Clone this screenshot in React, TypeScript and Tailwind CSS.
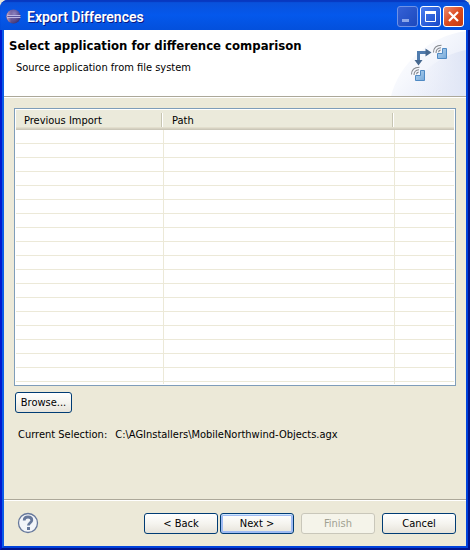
import type { ButtonHTMLAttributes, ReactNode } from "react";
import clsx from "clsx";

const ROWS = Array.from({ length: 18 }, (_, i) => i);

function EclipseIcon() {
  return (
    <svg width="16" height="16" viewBox="0 0 16 16" aria-hidden="true">
      <defs>
        <radialGradient id="orb" cx="0.55" cy="0.3" r="0.75">
          <stop offset="0" stopColor="#8d84c4" />
          <stop offset="0.5" stopColor="#50478e" />
          <stop offset="1" stopColor="#241d5c" />
        </radialGradient>
        <linearGradient id="rim" x1="0" y1="0" x2="1" y2="0">
          <stop offset="0" stopColor="#e0b4c0" />
          <stop offset="0.35" stopColor="#8d78b0" stopOpacity="0.4" />
          <stop offset="1" stopColor="#8d78b0" stopOpacity="0" />
        </linearGradient>
      </defs>
      <circle cx="7.5" cy="7.5" r="7" fill="url(#orb)" />
      <circle cx="7.5" cy="7.5" r="7" fill="url(#rim)" />
      <path d="M1 6.5h13.5M1 8.5h13.5" stroke="#bdb8e4" />
      <path d="M1.5 7.5h12.5" stroke="#5a529c" />
    </svg>
  );
}

function Device({ x, y }: { x: number; y: number }) {
  return (
    <g transform={`translate(${x} ${y})`}>
      <path d="M9.5 4.5H13.5V14.5H4.5V9.5H9.5Z" fill="url(#device)" stroke="#4f8ac4" />
      <path
        d="M0.5 8.5C0.5 4 3.5 1.3 8.5 1.2M3 9C3 5.9 4.8 3.9 8 3.7M5.5 8.2C5.6 7 6.3 6.3 7.6 6.1"
        fill="none"
        stroke="#85888d"
        strokeWidth="1.1"
      />
    </g>
  );
}

function BannerArt() {
  return (
    <svg width="75" height="66" viewBox="0 0 75 66" aria-hidden="true">
      <defs>
        <linearGradient id="swirl" x1="0.1" y1="0.1" x2="1" y2="0.8">
          <stop offset="0" stopColor="#ffffff" />
          <stop offset="0.4" stopColor="#f6f8fd" />
          <stop offset="1" stopColor="#e4e9f7" />
        </linearGradient>
        <linearGradient id="swirl2" x1="0" y1="0.5" x2="1" y2="0.4">
          <stop offset="0" stopColor="#eef1fa" stopOpacity="0" />
          <stop offset="1" stopColor="#dfe5f5" />
        </linearGradient>
        <linearGradient id="device" x1="0" y1="0" x2="1" y2="1">
          <stop offset="0" stopColor="#b4d3ee" />
          <stop offset="1" stopColor="#76a9da" />
        </linearGradient>
      </defs>
      <path d="M0 66C8 34 38 6 75 1V66Z" fill="url(#swirl)" />
      <path d="M20 66C26 44 46 26 75 20V66Z" fill="url(#swirl2)" />
      <path d="M27.5 30V22.5H35" fill="none" stroke="#507cae" strokeWidth="3" />
      <path d="M34.5 18.5V26.5L40.5 22.5ZM23.5 30H31.5L27.5 35.5Z" fill="#46688f" />
      <Device x={42} y={14} />
      <Device x={20} y={36} />
    </svg>
  );
}

function HelpIcon() {
  return (
    <svg width="22" height="22" viewBox="0 0 22 22" aria-hidden="true">
      <circle cx="11" cy="11" r="9.5" fill="#f3f5f9" stroke="#66789b" strokeWidth="1.3" />
      <path
        d="M7.2 8.6C7.2 6.2 8.8 5 11 5C13.4 5 14.8 6.3 14.8 8.2C14.8 10.7 11.4 10.8 11.4 13.6"
        fill="none"
        stroke="#66789b"
        strokeWidth="2.8"
      />
      <rect x="10" y="15" width="3" height="3" fill="#66789b" />
    </svg>
  );
}

function CaptionButton({ label, className, children }: { label: string; className: string; children: ReactNode }) {
  return (
    <button
      type="button"
      aria-label={label}
      className={clsx("h-[21px] w-[21px] rounded-[3px] border bg-linear-to-br", className)}
    >
      <svg width="19" height="19" viewBox="0 0 19 19" aria-hidden="true">
        {children}
      </svg>
    </button>
  );
}

function DialogButton({ className, ...props }: ButtonHTMLAttributes<HTMLButtonElement>) {
  return (
    <button
      type="button"
      className={clsx(
        "h-[21px] rounded-[3px] border border-[#003c74] bg-linear-to-b from-white via-[#f5f4ef] to-[#e6e3da] pt-px text-center leading-[18px]",
        "disabled:border-[#c9c7ba] disabled:bg-[#f5f4ea] disabled:bg-none disabled:text-[#a1a192]",
        className,
      )}
      {...props}
    />
  );
}

export default function App() {
  return (
    <div className="bg-[#e9e6d8]">
      <div className="flex min-h-screen flex-col overflow-hidden rounded-t-lg bg-[#0842dc] font-['DejaVu_Sans_Condensed','DejaVu_Sans',sans-serif] text-[11px] text-black">
        <header className="flex h-[30px] items-center bg-linear-to-b from-[#0a50d8] via-[#0458ec] to-[#0350dc] px-[6px] pt-[3px] shadow-[inset_0_2px_1px_#0838c0]">
          <EclipseIcon />
          <h1 className="ml-[5px] flex-1 font-[Roboto,sans-serif] text-[14px] leading-[18px] font-semibold text-white [text-shadow:1px_1px_#0a1883]">
            Export Differences
          </h1>
          <div className="flex gap-[2px]">
            <CaptionButton label="Minimize" className="border-[#6f92e6] from-[#3561d6] to-[#1c49bd]">
              <path d="M4 13.5h7" stroke="#8ba6e9" strokeWidth="3" />
            </CaptionButton>
            <CaptionButton label="Maximize" className="border-white from-[#4a7df0] to-[#1647c8]">
              <path d="M4.5 5.5h10v9h-10z" fill="none" stroke="#fff" />
              <path d="M4 5.5h11" stroke="#fff" strokeWidth="3" />
            </CaptionButton>
            <CaptionButton label="Close" className="border-white from-[#ec8a6c] via-[#dc4a1e] to-[#c23a10]">
              <path d="M5 5l9 9M14 5l-9 9" stroke="#fff" strokeWidth="2.2" />
            </CaptionButton>
          </div>
        </header>

        <div className="flex flex-1 flex-col border-x-2 border-b-2 border-r-[#00138c] border-b-[#00138c] border-l-[#0019cf]">
          <div className="flex flex-1 flex-col border-x-2 border-b-2 border-r-[#0042dc] border-b-[#0042dc] border-l-[#0a5be8] bg-[#ece9d8]">
            <section className="flex h-[67px] justify-between border-b border-[#aca899] bg-white">
              <div className="pt-2 pl-[5px]">
                <h2 className="text-[13px] leading-4 font-bold">Select application for difference comparison</h2>
                <p className="mt-[7px] ml-[7px] leading-[14px]">Source application from file system</p>
              </div>
              <BannerArt />
            </section>

            <main className="flex-1 border-t border-white px-[10px] pt-[10px]">
              <div className="border border-[#7f9db9] bg-white p-px">
                <table className="w-full table-fixed border-separate border-spacing-0">
                  <colgroup>
                    <col className="w-[148px]" />
                    <col />
                    <col className="w-[59px]" />
                  </colgroup>
                  <thead>
                    <tr className="h-[20px] bg-[#ebeadb] shadow-[inset_0_-1px_#cbc7b8,inset_0_-2px_#d6d2c2,inset_0_-3px_#e2decd]">
                      {["Previous Import", "Path", ""].map((title, i) => (
                        <th key={i} className="p-0 pb-px text-left font-normal">
                          <div
                            className={clsx(
                              "h-[14px] pl-2 leading-[16px]",
                              i < 2 && "mr-px border-r border-white shadow-[inset_-1px_0_#c7c5b2]",
                            )}
                          >
                            {title}
                          </div>
                        </th>
                      ))}
                    </tr>
                  </thead>
                  <tbody>
                    {ROWS.map((row) => (
                      <tr key={row} className="h-[14px]">
                        <td className="border-r border-b border-[#ece9d8] p-0" />
                        <td className="border-r border-b border-[#ece9d8] p-0" />
                        <td className="border-b border-[#ece9d8] p-0" />
                      </tr>
                    ))}
                    <tr className="h-[2px]">
                      <td className="border-r border-[#ece9d8] p-0" />
                      <td className="border-r border-[#ece9d8] p-0" />
                      <td className="p-0" />
                    </tr>
                  </tbody>
                </table>
              </div>
              <DialogButton className="mt-[6px] ml-px block w-[57px]">Browse...</DialogButton>
              <dl className="mt-[15px] ml-[4px] flex gap-2 leading-[14px]">
                <dt>Current Selection:</dt>
                <dd>C:\AGInstallers\MobileNorthwind-Objects.agx</dd>
              </dl>
            </main>

            <footer className="flex h-[47px] items-center border-t border-[#aca899] pr-[10px] pl-[13px] shadow-[inset_0_1px_#fff]">
              <button type="button" aria-label="Help" className="mr-auto">
                <HelpIcon />
              </button>
              <div className="flex">
                <DialogButton className="w-[74px]">&lt; Back</DialogButton>
                <DialogButton className="ml-[2px] w-[74px] shadow-[inset_0_1px_#cee7ff,inset_0_0_0_2px_#9fbbf3]">
                  Next &gt;
                </DialogButton>
                <DialogButton className="ml-[7px] w-[74px]" disabled>
                  Finish
                </DialogButton>
                <DialogButton className="ml-[7px] w-[74px]">Cancel</DialogButton>
              </div>
            </footer>
          </div>
        </div>
      </div>
    </div>
  );
}
